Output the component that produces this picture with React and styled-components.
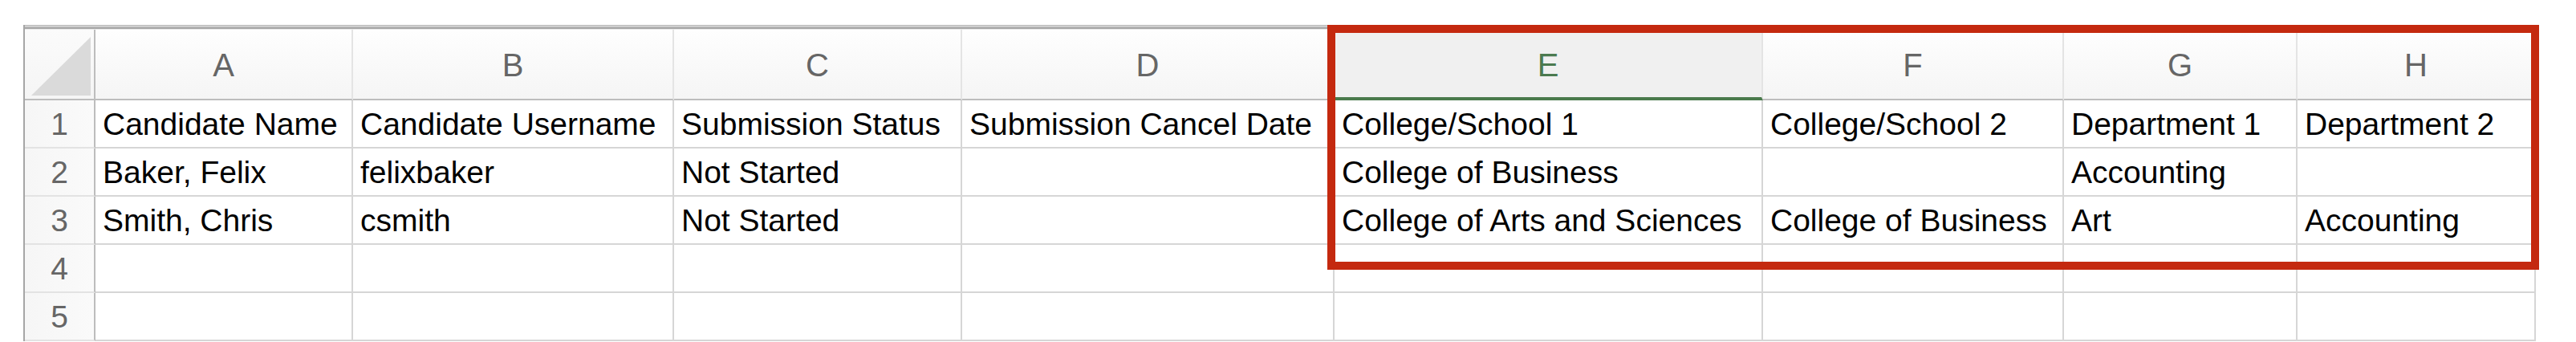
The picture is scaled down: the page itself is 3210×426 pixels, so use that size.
import React from 'react'
import styled, { createGlobalStyle, css } from 'styled-components'

const GlobalStyle = createGlobalStyle`
  html, body {
    margin: 0;
    padding: 0;
    background: #ffffff;
  }
  body {
    font-family: 'Liberation Sans', Arial, sans-serif;
  }
`

const columns = [
  { key: 'A', width: 321 },
  { key: 'B', width: 400 },
  { key: 'C', width: 359 },
  { key: 'D', width: 464 },
  { key: 'E', width: 534, selected: true },
  { key: 'F', width: 375 },
  { key: 'G', width: 291 },
  { key: 'H', width: 297 },
]

const rows = [
  ['Candidate Name', 'Candidate Username', 'Submission Status', 'Submission Cancel Date', 'College/School 1', 'College/School 2', 'Department 1', 'Department 2'],
  ['Baker, Felix', 'felixbaker', 'Not Started', '', 'College of Business', '', 'Accounting', ''],
  ['Smith, Chris', 'csmith', 'Not Started', '', 'College of Arts and Sciences', 'College of Business', 'Art', 'Accounting'],
  ['', '', '', '', '', '', '', ''],
  ['', '', '', '', '', '', '', ''],
]

const Page = styled.div`
  position: relative;
  width: 3210px;
  height: 426px;
  padding: 31px 0 0 29px;
  box-sizing: border-box;
  overflow: hidden;
`

const Sheet = styled.div`
  display: flex;
  flex-direction: column;
  width: 3132px;
  border-left: 2px solid #a6a6a6;
`

const TopEdge = styled.div`
  height: 6px;
  background: linear-gradient(#b9b9b9 0 1px, #d9d9d9 1px 2px, #c4c4c4 2px 3px, #a8a8a8 3px 5px, #e9e9e9 5px);
`

const Row = styled.div`
  display: flex;
  height: ${p => p.$height}px;
`

const Corner = styled.div`
  position: relative;
  width: 88px;
  flex: none;
  box-sizing: border-box;
  background: linear-gradient(#fbfbfb, #f5f5f5);
  border-right: 2px solid #bdbdbd;
  border-bottom: 2px solid #bdbdbd;

  &::after {
    content: '';
    position: absolute;
    right: 4px;
    bottom: 4px;
    width: 74px;
    height: 73px;
    background: #dadada;
    clip-path: polygon(100% 0, 100% 100%, 0 100%);
  }
`

const ColHead = styled.div`
  width: ${p => p.$width}px;
  flex: none;
  box-sizing: border-box;
  display: flex;
  align-items: center;
  justify-content: center;
  padding-top: 3px;
  font-size: 40px;
  color: #666666;
  background: linear-gradient(#fefefe, #f5f5f5);
  border-right: 2px solid #e4e4e4;
  border-bottom: 2px solid #bdbdbd;

  ${p => p.$selected && css`
    color: #4b7a4f;
    background: #f0f0f0;
    border-bottom: 4px solid #4a7a4c;
    padding-top: 5px;
  `}
`

const RowHead = styled.div`
  width: 88px;
  flex: none;
  box-sizing: border-box;
  display: flex;
  align-items: flex-end;
  justify-content: center;
  padding-bottom: 6px;
  font-size: 39px;
  line-height: 45px;
  color: #666666;
  background: linear-gradient(90deg, #f6f6f6, #fafafa);
  border-right: 2px solid #bdbdbd;
  border-bottom: 2px solid #e3e3e3;
`

const Cell = styled.div`
  width: ${p => p.$width}px;
  flex: none;
  box-sizing: border-box;
  display: flex;
  align-items: flex-end;
  padding: 0 0 6px 9px;
  font-size: 39px;
  line-height: 45px;
  color: #000000;
  white-space: nowrap;
  background: #ffffff;
  border-right: 2px solid #d6d6d6;
  border-bottom: 2px solid #d6d6d6;
`

const Highlight = styled.div`
  position: absolute;
  left: 1654px;
  top: 31px;
  width: 1510px;
  height: 305px;
  box-sizing: border-box;
  border: 10px solid #c4290f;
  pointer-events: none;
`

export default function App() {
  return (
    <>
      <GlobalStyle />
      <Page>
        <Sheet>
          <TopEdge />
          <Row $height={88}>
            <Corner />
            {columns.map(c => (
              <ColHead key={c.key} $width={c.width} $selected={c.selected}>{c.key}</ColHead>
            ))}
          </Row>
          {rows.map((r, i) => (
            <Row key={i} $height={60}>
              <RowHead>{i + 1}</RowHead>
              {r.map((v, j) => (
                <Cell key={j} $width={columns[j].width}>{v}</Cell>
              ))}
            </Row>
          ))}
        </Sheet>
        <Highlight />
      </Page>
    </>
  )
}
